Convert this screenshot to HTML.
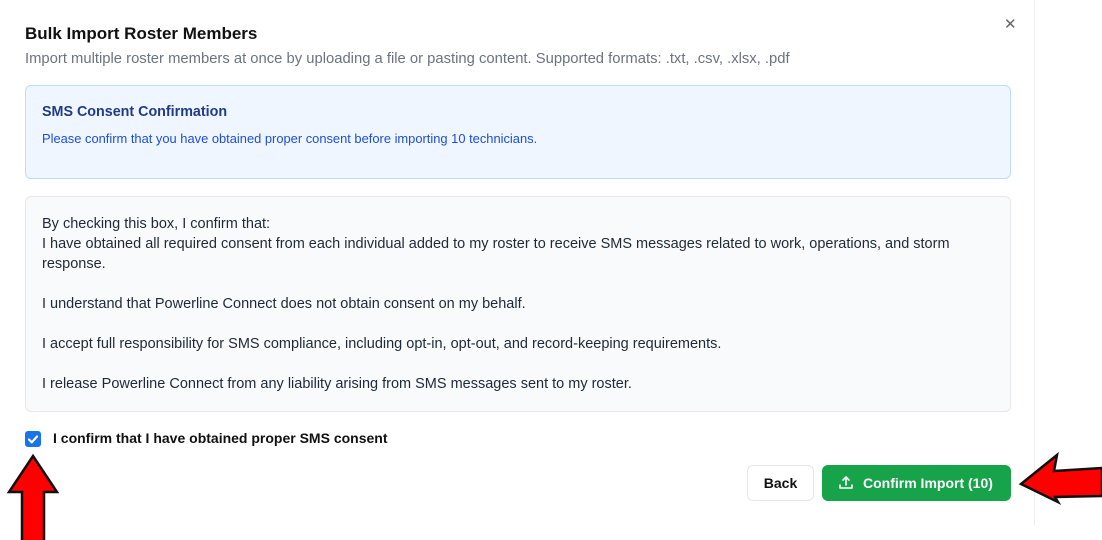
<!DOCTYPE html>
<html><head><style>
*{box-sizing:border-box;margin:0;padding:0}
body{width:1102px;height:540px;background:#fff;font-family:"Liberation Sans",sans-serif;position:relative;overflow:hidden;color:#111}
.modal{position:absolute;left:0;top:0;width:1035px;height:525px;background:#fff;border-right:1px solid #eee}
.t{position:absolute;left:25px;top:24px;font-size:17px;font-weight:bold;color:#111}
.s{position:absolute;left:25px;top:51px;font-size:14.8px;color:#6b7280}
.x{position:absolute;left:1004px;top:15px;font-size:15px;color:#666}
.blue{position:absolute;left:25px;top:85px;width:986px;height:94px;background:#eff6ff;border:1px solid #bfdbfe;border-radius:6px}
.blue h3{position:absolute;left:16px;top:18px;font-size:14.3px;color:#1e3a8a;font-weight:bold}
.blue p{position:absolute;left:16px;top:45px;font-size:12.9px;color:#1d4ed8}
.gray{position:absolute;left:25px;top:196px;width:986px;height:216px;background:#f9fafb;border:1px solid #e5e7eb;border-radius:6px;padding:17px 40px 16px 16px;font-size:14.5px;line-height:20px;color:#1f2937}
.cb{position:absolute;left:25px;top:431px;width:16px;height:16px;background:#1a73e8;border-radius:3px}
.lbl{position:absolute;left:53px;top:430px;font-size:14px;font-weight:bold;color:#111}
.back{position:absolute;left:747px;top:465px;width:67px;height:36px;border:1px solid #e5e7eb;border-radius:6px;font-size:14px;font-weight:bold;text-align:center;line-height:34px}
.conf{position:absolute;left:822px;top:465px;width:189px;height:36px;background:#16a34a;border-radius:6px;color:#fff;font-size:14px;font-weight:bold;line-height:36px;padding-left:41px}
</style></head><body>
<div class="modal">
<div class="t">Bulk Import Roster Members</div>
<div class="s">Import multiple roster members at once by uploading a file or pasting content. Supported formats: .txt, .csv, .xlsx, .pdf</div>
<div class="x">✕</div>
<div class="blue"><h3>SMS Consent Confirmation</h3><p>Please confirm that you have obtained proper consent before importing 10 technicians.</p></div>
<div class="gray">By checking this box, I confirm that:<br>I have obtained all required consent from each individual added to my roster to receive SMS messages related to work, operations, and storm response.<br><br>I understand that Powerline Connect does not obtain consent on my behalf.<br><br>I accept full responsibility for SMS compliance, including opt-in, opt-out, and record-keeping requirements.<br><br>I release Powerline Connect from any liability arising from SMS messages sent to my roster.</div>
<div class="cb"><svg width="16" height="16" viewBox="0 0 16 16"><path d="M4 8.5l2.8 2.8L12 5.5" stroke="#fff" stroke-width="2.2" fill="none" stroke-linecap="round" stroke-linejoin="round"/></svg></div>
<div class="lbl">I confirm that I have obtained proper SMS consent</div>
<div class="back">Back</div>
<div class="conf"><svg style="position:absolute;left:16px;top:10px" width="16" height="16" viewBox="0 0 16 16" fill="none" stroke="#fff" stroke-width="1.6" stroke-linecap="round" stroke-linejoin="round"><path d="M8 10V2M5 5l3-3 3 3M2 10v3h12v-3"/></svg>Confirm Import (10)</div>
</div>
<svg style="position:absolute;left:0;top:0" width="1102" height="540">
<path d="M33 456 L57 492 L44 492 L44 545 L22 545 L22 492 L9 492 Z" fill="#f00" stroke="#111" stroke-width="2.5" stroke-linejoin="miter"/>
<path d="M1021 484 L1057 455 L1054 471 L1102 468 L1102 496 L1055 497 L1058 502 Z" fill="#f00" stroke="#111" stroke-width="2.5"/>
</svg>
</body></html>
